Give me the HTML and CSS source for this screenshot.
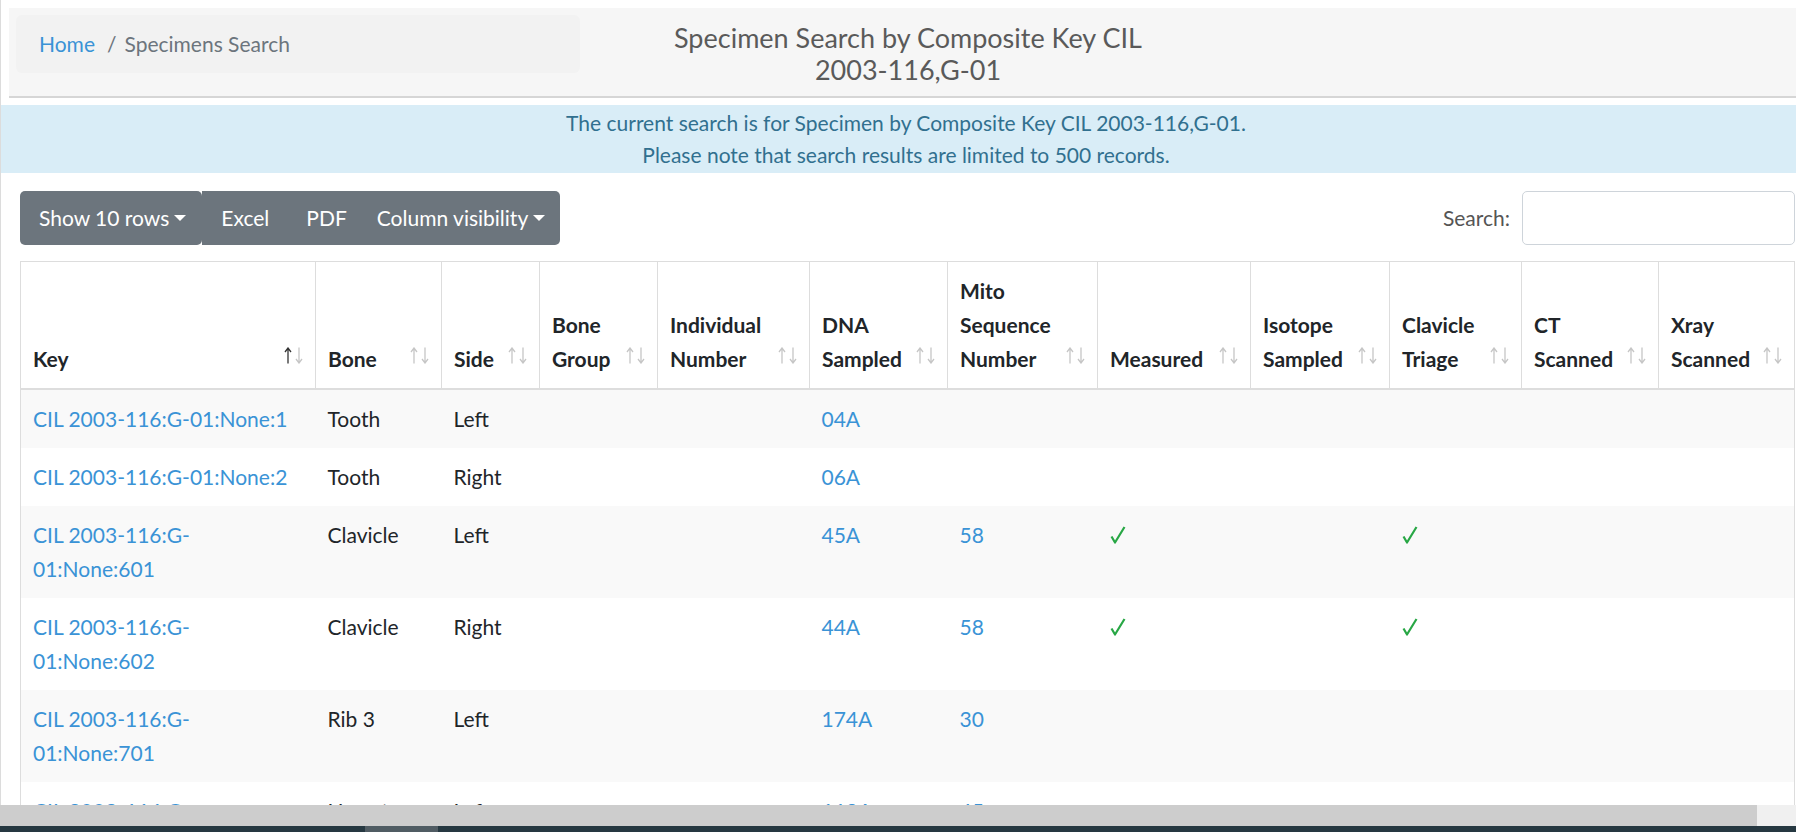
FILE: index.html
```html
<!DOCTYPE html>
<html lang="en">
<head>
<meta charset="utf-8">
<title>Specimens Search</title>
<link rel="stylesheet" href="styles.css">
</head>
<body>
<div class="screen">
  <div class="viewport">
    <div class="page">
      <header class="topbar">
        <nav class="crumbs">
          <a href="#" class="crumb-link">Home</a>
          <span class="crumb-sep">/</span>
          <span class="crumb-cur">Specimens Search</span>
        </nav>
        <h1 class="title">Specimen Search by Composite Key CIL<br>2003-116,G-01</h1>
        <div class="spacer"></div>
      </header>

      <div class="info">
        <p>The current search is for Specimen by Composite Key CIL 2003-116,G-01.</p>
        <p>Please note that search results are limited to 500 records.</p>
      </div>

      <div class="toolbar">
        <div class="btn-group">
          <button class="btn btn-first">Show 10 rows<span class="caret"></span></button>
          <button class="btn btn-excel">Excel</button>
          <button class="btn btn-pdf">PDF</button>
          <button class="btn btn-last">Column visibility<span class="caret"></span></button>
        </div>
        <label class="search">Search:<input type="search" class="search-input"></label>
      </div>

      <div class="table-wrap">
        <table class="grid">
          <colgroup>
            <col class="c-key"><col class="c-bone"><col class="c-side"><col class="c-group">
            <col class="c-ind"><col class="c-dna"><col class="c-mito"><col class="c-meas">
            <col class="c-iso"><col class="c-clav"><col class="c-ct"><col class="c-xray">
          </colgroup>
          <thead>
            <tr>
              <th><div class="th"><span class="lbl">Key</span><svg class="sort asc" viewBox="0 0 20 17" width="20" height="17"><path class="up" d="M4 16.5V1M1 5L4 1L7 5"/><path class="down" d="M15 0.5V16M12 12L15 16L18 12"/></svg></div></th>
              <th><div class="th"><span class="lbl">Bone</span><svg class="sort" viewBox="0 0 20 17" width="20" height="17"><path class="up" d="M4 16.5V1M1 5L4 1L7 5"/><path class="down" d="M15 0.5V16M12 12L15 16L18 12"/></svg></div></th>
              <th><div class="th"><span class="lbl">Side</span><svg class="sort" viewBox="0 0 20 17" width="20" height="17"><path class="up" d="M4 16.5V1M1 5L4 1L7 5"/><path class="down" d="M15 0.5V16M12 12L15 16L18 12"/></svg></div></th>
              <th><div class="th"><span class="lbl">Bone Group</span><svg class="sort" viewBox="0 0 20 17" width="20" height="17"><path class="up" d="M4 16.5V1M1 5L4 1L7 5"/><path class="down" d="M15 0.5V16M12 12L15 16L18 12"/></svg></div></th>
              <th><div class="th"><span class="lbl">Individual Number</span><svg class="sort" viewBox="0 0 20 17" width="20" height="17"><path class="up" d="M4 16.5V1M1 5L4 1L7 5"/><path class="down" d="M15 0.5V16M12 12L15 16L18 12"/></svg></div></th>
              <th><div class="th"><span class="lbl">DNA Sampled</span><svg class="sort" viewBox="0 0 20 17" width="20" height="17"><path class="up" d="M4 16.5V1M1 5L4 1L7 5"/><path class="down" d="M15 0.5V16M12 12L15 16L18 12"/></svg></div></th>
              <th><div class="th"><span class="lbl">Mito Sequence Number</span><svg class="sort" viewBox="0 0 20 17" width="20" height="17"><path class="up" d="M4 16.5V1M1 5L4 1L7 5"/><path class="down" d="M15 0.5V16M12 12L15 16L18 12"/></svg></div></th>
              <th><div class="th"><span class="lbl">Measured</span><svg class="sort" viewBox="0 0 20 17" width="20" height="17"><path class="up" d="M4 16.5V1M1 5L4 1L7 5"/><path class="down" d="M15 0.5V16M12 12L15 16L18 12"/></svg></div></th>
              <th><div class="th"><span class="lbl">Isotope Sampled</span><svg class="sort" viewBox="0 0 20 17" width="20" height="17"><path class="up" d="M4 16.5V1M1 5L4 1L7 5"/><path class="down" d="M15 0.5V16M12 12L15 16L18 12"/></svg></div></th>
              <th><div class="th"><span class="lbl">Clavicle Triage</span><svg class="sort" viewBox="0 0 20 17" width="20" height="17"><path class="up" d="M4 16.5V1M1 5L4 1L7 5"/><path class="down" d="M15 0.5V16M12 12L15 16L18 12"/></svg></div></th>
              <th><div class="th"><span class="lbl">CT Scanned</span><svg class="sort" viewBox="0 0 20 17" width="20" height="17"><path class="up" d="M4 16.5V1M1 5L4 1L7 5"/><path class="down" d="M15 0.5V16M12 12L15 16L18 12"/></svg></div></th>
              <th><div class="th"><span class="lbl">Xray Scanned</span><svg class="sort" viewBox="0 0 20 17" width="20" height="17"><path class="up" d="M4 16.5V1M1 5L4 1L7 5"/><path class="down" d="M15 0.5V16M12 12L15 16L18 12"/></svg></div></th>
            </tr>
          </thead>
          <tbody>
            <tr>
              <td><a href="#">CIL 2003-116:G-<wbr>01:None:1</a></td><td>Tooth</td><td>Left</td><td></td><td></td>
              <td><a href="#">04A</a></td><td></td><td></td><td></td><td></td><td></td><td></td>
            </tr>
            <tr>
              <td><a href="#">CIL 2003-116:G-<wbr>01:None:2</a></td><td>Tooth</td><td>Right</td><td></td><td></td>
              <td><a href="#">06A</a></td><td></td><td></td><td></td><td></td><td></td><td></td>
            </tr>
            <tr>
              <td><a href="#">CIL 2003-116:G-<wbr>01:None:601</a></td><td>Clavicle</td><td>Left</td><td></td><td></td>
              <td><a href="#">45A</a></td><td><a href="#">58</a></td>
              <td><svg class="check" viewBox="0 0 16 18" width="16" height="18"><path d="M1.5 10.5L5 16.5L14.5 1"/></svg></td>
              <td></td>
              <td><svg class="check" viewBox="0 0 16 18" width="16" height="18"><path d="M1.5 10.5L5 16.5L14.5 1"/></svg></td>
              <td></td><td></td>
            </tr>
            <tr>
              <td><a href="#">CIL 2003-116:G-<wbr>01:None:602</a></td><td>Clavicle</td><td>Right</td><td></td><td></td>
              <td><a href="#">44A</a></td><td><a href="#">58</a></td>
              <td><svg class="check" viewBox="0 0 16 18" width="16" height="18"><path d="M1.5 10.5L5 16.5L14.5 1"/></svg></td>
              <td></td>
              <td><svg class="check" viewBox="0 0 16 18" width="16" height="18"><path d="M1.5 10.5L5 16.5L14.5 1"/></svg></td>
              <td></td><td></td>
            </tr>
            <tr>
              <td><a href="#">CIL 2003-116:G-<wbr>01:None:701</a></td><td>Rib 3</td><td>Left</td><td></td><td></td>
              <td><a href="#">174A</a></td><td><a href="#">30</a></td><td></td><td></td><td></td><td></td><td></td>
            </tr>
            <tr>
              <td><a href="#">CIL 2003-116:G-<wbr>01:None:801</a></td><td>Hamate</td><td>Left</td><td></td><td></td>
              <td><a href="#">119A</a></td><td><a href="#">45</a></td><td></td><td></td><td></td><td></td><td></td>
            </tr>
          </tbody>
        </table>
      </div>
    </div>
  </div>
  <div class="hscroll"><div class="hthumb"></div></div>
  <div class="taskbar"><div class="tthumb"></div></div>
</div>
</body>
</html>
```

FILE: styles.css
```css
* { box-sizing: border-box; }

html, body {
  margin: 0;
  padding: 0;
  height: 100%;
  overflow: hidden;
}

body {
  font-family: Lato, "Noto Sans", sans-serif;
  font-size: 21px;
  line-height: 34px;
  color: #212529;
  background: #fff;
}

.screen {
  display: flex;
  flex-direction: column;
  height: 832px;
}

.viewport {
  flex: 1;
  overflow: hidden;
  border-left: 1px solid #dcdcdc;
}

.page {
  width: 1810px;
  padding-top: 8px;
}

/* ---------- header ---------- */
.topbar {
  margin-left: 8px;
  height: 90px;
  background: #f6f6f6;
  border-bottom: 2px solid #d6d6d6;
  display: grid;
  grid-template-columns: 595px 608px 1fr;
  align-items: start;
}

.crumbs {
  margin: 7px 0 0 7px;
  height: 58px;
  width: 564px;
  background: #f2f2f2;
  border-radius: 6px;
  padding: 12px 23px;
  display: flex;
  align-items: center;
}

.crumb-link {
  color: #3a93d6;
  text-decoration: none;
}

.crumb-sep {
  color: #6c757d;
  margin: 0 8px 0 12px;
}

.crumb-cur {
  color: #6c757d;
}

.title {
  margin: 0;
  align-self: center;
  padding-top: 4px;
  text-align: center;
  font-size: 27px;
  line-height: 32px;
  font-weight: 400;
  color: #5a5a5a;
}

/* ---------- info ---------- */
.info {
  margin-top: 7px;
  height: 68px;
  padding: 2px 0;
  background: #d9edf7;
  color: #31708f;
  text-align: center;
  line-height: 32px;
}

.info p { margin: 0; }

/* ---------- toolbar ---------- */
.toolbar {
  margin-top: 18px;
  padding: 0 16px 0 19px;
  height: 54px;
  display: flex;
  justify-content: space-between;
  align-items: center;
}

.btn-group {
  display: flex;
  height: 54px;
}

.btn {
  font-family: inherit;
  font-size: 21px;
  line-height: 30px;
  color: #fff;
  background: #6c757d;
  border: 0;
  padding: 12px 19px;
  display: flex;
  align-items: center;
  height: 54px;
}

.btn-first {
  border-radius: 5px;
  padding: 12px 16px 12px 19px;
}

.btn-excel { padding: 12px 19px 12px 19px; }

.btn-pdf { padding: 12px 14px 12px 18px; }

.btn-last {
  border-radius: 0 5px 5px 0;
  padding: 12px 15px 12px 16px;
}

.caret {
  display: inline-block;
  margin-left: 5px;
  width: 0;
  height: 0;
  border-left: 6px solid transparent;
  border-right: 6px solid transparent;
  border-top: 6px solid #fff;
}

.search {
  display: flex;
  align-items: center;
  gap: 12px;
  color: #555;
}

.search-input {
  width: 273px;
  height: 54px;
  border: 1px solid #ced4da;
  border-radius: 5px;
  background: #fff;
  font: inherit;
}

/* ---------- table ---------- */
.table-wrap {
  margin-top: 16px;
  margin-left: 19px;
}

.grid {
  width: 1774px;
  table-layout: fixed;
  border-collapse: collapse;
  border-left: 1px solid #dddddd;
  border-right: 1px solid #dddddd;
}

.c-key { width: 295px; }
.c-bone { width: 126px; }
.c-side { width: 98px; }
.c-group { width: 118px; }
.c-ind { width: 152px; }
.c-dna { width: 138px; }
.c-mito { width: 150px; }
.c-meas { width: 153px; }
.c-iso { width: 139px; }
.c-clav { width: 132px; }
.c-ct { width: 137px; }
.c-xray { width: 136px; }

.grid th {
  border: 1px solid #dddddd;
  border-bottom: 2px solid #dddddd;
  padding: 12px 11px 12px 12px;
  vertical-align: bottom;
  text-align: left;
  font-weight: 700;
  background: #fff;
}

.th {
  display: flex;
  align-items: flex-end;
  justify-content: space-between;
  gap: 6px;
}

.sort {
  flex: none;
  margin-bottom: 12px;
}

.sort path {
  fill: none;
  stroke: #c6c6c6;
  stroke-width: 1.3;
}

.sort.asc .up { stroke: #333; }

.grid td {
  padding: 12px;
  vertical-align: top;
}

.grid tbody tr:nth-child(odd) td { background: #f9f9f9; }

.grid a {
  color: #3a93d6;
  text-decoration: none;
}

.check {
  display: block;
  margin-top: 8px;
}

.check path {
  fill: none;
  stroke: #28a745;
  stroke-width: 2.2;
  stroke-linejoin: round;
}

/* ---------- fake scrollbars ---------- */
.hscroll {
  height: 21px;
  flex: none;
  display: flex;
  background: #f0f0f0;
}

.hthumb {
  width: 1757px;
  background: #cdcdcd;
}

.taskbar {
  height: 6px;
  flex: none;
  display: flex;
  padding-left: 365px;
  background: #263841;
}

.tthumb {
  width: 73px;
  background: #505c63;
}
```
